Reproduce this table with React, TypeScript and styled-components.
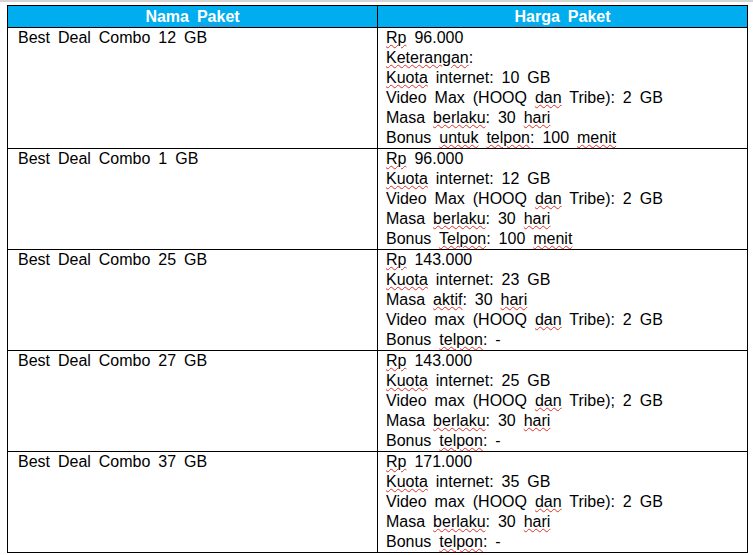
import styled, { createGlobalStyle } from 'styled-components'

const GlobalStyle = createGlobalStyle`
  html, body {
    margin: 0;
    padding: 0;
    background: #fff;
  }
  body {
    font-family: "Liberation Sans", Arial, sans-serif;
    color: #000;
  }
`

const Page = styled.div`
  width: 753px;
  height: 555px;
  background: #fff;
  display: flex;
  flex-direction: column;
  overflow: hidden;
`

const TopEdge = styled.div`
  height: 2px;
  background: #d4d4d4;
  margin-bottom: 3px;
`

const Table = styled.table`
  margin-left: 7px;
  width: 740px;
  border-collapse: collapse;
  table-layout: fixed;
  font-size: 16px;
  word-spacing: 3.5px;
  border: 1.5px solid #000;
`

const HeadCell = styled.th`
  background: #00aeef;
  color: #fff;
  font-weight: bold;
  text-align: center;
  height: 21px;
  padding: 0;
  line-height: 20px;
  border: 1px solid #000;
  border-bottom-width: 1.5px;
`

const Cell = styled.td`
  vertical-align: top;
  padding: 0 0 0 ${(p: { $pad: number }) => p.$pad}px;
  line-height: 20px;
  border: 1px solid #000;
  border-bottom-width: 1.5px;
`

const Line = styled.div`
  white-space: nowrap;
`

const Typo = styled.span<{ $color?: string }>`
  text-decoration: underline wavy ${(p) => p.$color || '#e0302a'};
  text-decoration-thickness: 1px;
  text-underline-offset: 1px;
`

const t = (w: string) => <Typo>{w}</Typo>

type Pkg = { name: string; lines: React.ReactNode[] }

const packages: Pkg[] = [
  {
    name: 'Best Deal Combo 12 GB',
    lines: [
      <>{t('Rp')} 96.000</>,
      <>{t('Keterangan')}:</>,
      <>{t('Kuota')} internet: 10 GB</>,
      <>Video Max (HOOQ {t('dan')} Tribe): 2 GB</>,
      <>Masa {t('berlaku')}: 30 {t('hari')}</>,
      <>Bonus {t('untuk')} {t('telpon')}: 100 {t('menit')}</>,
    ],
  },
  {
    name: 'Best Deal Combo 1 GB',
    lines: [
      <>{t('Rp')} 96.000</>,
      <>{t('Kuota')} internet: 12 GB</>,
      <>Video Max (HOOQ {t('dan')} Tribe): 2 GB</>,
      <>Masa {t('berlaku')}: 30 {t('hari')}</>,
      <>Bonus {t('Telpon')}: 100 {t('menit')}</>,
    ],
  },
  {
    name: 'Best Deal Combo 25 GB',
    lines: [
      <>{t('Rp')} 143.000</>,
      <>{t('Kuota')} internet: 23 GB</>,
      <>Masa {t('aktif')}: 30 {t('hari')}</>,
      <>Video max (HOOQ {t('dan')} Tribe): 2 GB</>,
      <>Bonus {t('telpon')}: -</>,
    ],
  },
  {
    name: 'Best Deal Combo 27 GB',
    lines: [
      <>{t('Rp')} 143.000</>,
      <>{t('Kuota')} internet: 25 GB</>,
      <>Video max (HOOQ {t('dan')} Tribe); 2 GB</>,
      <>Masa {t('berlaku')}: 30 {t('hari')}</>,
      <>Bonus {t('telpon')}: -</>,
    ],
  },
  {
    name: 'Best Deal Combo 37 GB',
    lines: [
      <>{t('Rp')} 171.000</>,
      <>{t('Kuota')} internet: 35 GB</>,
      <>Video max (HOOQ {t('dan')} Tribe): 2 GB</>,
      <>Masa {t('berlaku')}: 30 {t('hari')}</>,
      <>Bonus {t('telpon')}: -</>,
    ],
  },
]

const App = () => {
  return (
    <Page>
      <GlobalStyle />
      <TopEdge />
      <Table>
        <colgroup>
          <col style={{ width: 370 }} />
          <col style={{ width: 370 }} />
        </colgroup>
        <thead>
          <tr>
            <HeadCell>
              Nama <Typo $color="#5b7fb8">Paket</Typo>
            </HeadCell>
            <HeadCell>
              <Typo $color="#5b7fb8">Harga</Typo> Paket
            </HeadCell>
          </tr>
        </thead>
        <tbody>
          {packages.map((p) => (
            <tr key={p.name}>
              <Cell $pad={10}>{p.name}</Cell>
              <Cell $pad={8}>
                {p.lines.map((l, i) => (
                  <Line key={i}>{l}</Line>
                ))}
              </Cell>
            </tr>
          ))}
        </tbody>
      </Table>
    </Page>
  )
}

export default App
